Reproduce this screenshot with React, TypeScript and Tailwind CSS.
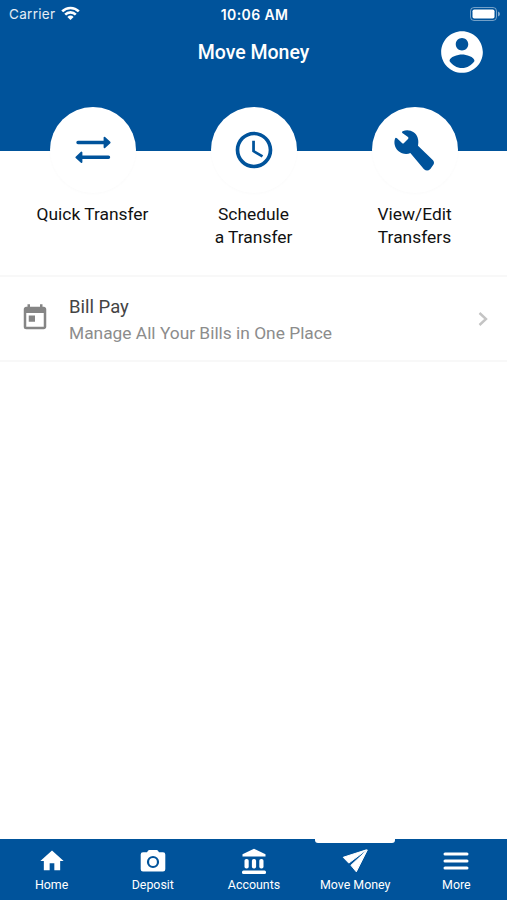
import React from 'react';
import { MdAccessTime, MdHome, MdToday } from 'react-icons/md';

const actions = [
  { label: ['Quick Transfer'], icon: <TransferIcon /> },
  { label: ['Schedule', 'a Transfer'], icon: <MdAccessTime size={44} /> },
  { label: ['View/Edit', 'Transfers'], icon: <WrenchIcon /> },
];

const tabs = [
  { label: 'Home', icon: <MdHome size={28} /> },
  { label: 'Deposit', icon: <CameraIcon /> },
  { label: 'Accounts', icon: <BankIcon /> },
  { label: 'Move Money', icon: <PlaneIcon />, active: true },
  { label: 'More', icon: <MenuIcon /> },
];

function TransferIcon() {
  return (
    <svg width="38" height="30" viewBox="0 0 38 30" fill="currentColor" stroke="currentColor" strokeLinecap="round" strokeLinejoin="round">
      <path d="M4 7.500H30M8 22.300H34.500" strokeWidth="3.400" />
      <path d="M30.500 2.700v9.600l5.200-4.800zM7.500 17.500v9.600l-5.200-4.800z" strokeWidth="1.800" />
    </svg>
  );
}

function WrenchIcon() {
  return (
    <svg width="50" height="50" viewBox="0 0 150 150" fill="currentColor">
      <path d="M38 19C56 11 77 20 83 38C86 47 85 54 84 62L129 106Q135 113 129 121L121 132Q112 141 102 133L61 84C51 89 35 87 25 78C14 68 11 52 15 41Q17 36 21 40L36 54Q39 57 42 54L54 42Q57 39 54 36L37 24Q34 21 38 19Z" />
    </svg>
  );
}

function AccountIcon() {
  return (
    <svg width="50" height="50" viewBox="0 0 24 24" fill="currentColor">
      <path d="M12 2C6.48 2 2 6.48 2 12s4.48 10 10 10 10-4.480 10-10S17.520 2 12 2zm0 3.300c1.660 0 3 1.340 3 3s-1.340 3-3 3-3-1.340-3-3 1.340-3 3-3zm0 14.400c-2.500 0-4.710-1.440-6-3.380.03-1.990 4-3.080 6-3.080 1.990 0 5.970 1.090 6 3.080-1.290 1.940-3.500 3.380-6 3.380z" />
    </svg>
  );
}

function CameraIcon() {
  return (
    <svg width="26" height="24" viewBox="0 0 26 24" fill="currentColor" fillRule="evenodd">
      <path d="M9.3 1h7.4q.8 0 1.3.7l1 1.600h4q2.300 0 2.300 2.300v14.600q0 2.300-2.300 2.300H3Q.7 22.500.7 20.200V5.600Q.7 3.300 3 3.300h4l1-1.600Q8.500 1 9.300 1zM13 6.900a6.100 6.100 0 1 0 0 12.200 6.100 6.100 0 0 0 0-12.200zm0 2.200a3.900 3.900 0 1 1 0 7.800 3.900 3.900 0 0 1 0-7.800z" />
    </svg>
  );
}

function BankIcon() {
  return (
    <svg width="26" height="27" viewBox="0 0 26 27" fill="currentColor">
      <path d="M13 .8L1.500 6.200v2.300h23V6.200z" />
      <rect x="3.500" y="11" width="4.200" height="9.500" rx="1.800" />
      <rect x="10.900" y="11" width="4.200" height="9.500" rx="1.800" />
      <rect x="18.300" y="11" width="4.200" height="9.500" rx="1.800" />
      <rect x="1" y="22.500" width="24" height="3.500" rx="1.500" />
    </svg>
  );
}

function PlaneIcon() {
  return (
    <svg width="28" height="26" viewBox="0 0 28 26" fill="currentColor" stroke="currentColor" strokeWidth="1" strokeLinejoin="round">
      <path d="M25.500 1.800L2.200 9.300l5.600 5.800z" />
      <path d="M26.300 2L9.900 17.300l5.400 6.500z" />
    </svg>
  );
}

function MenuIcon() {
  return (
    <svg width="26" height="22" viewBox="0 0 26 22" stroke="currentColor" strokeWidth="3" strokeLinecap="round">
      <path d="M2 4h22M2 11h22M2 18h22" />
    </svg>
  );
}

function StatusBar() {
  return (
    <div className="grid h-7 grid-cols-3 items-center pr-[7px] pl-[9px] font-['Inter',sans-serif]">
      <div className="flex items-center gap-[6px] text-white/90">
        <span className="text-[13.500px] tracking-[0.300px]">Carrier</span>
        <svg className="-mt-px" width="19" height="15" viewBox="0 0 19 15" fill="none" stroke="white" strokeWidth="2.600">
          <path d="M1.200 5.400a11.800 11.800 0 0 1 16.600 0M4.200 8.600a7.500 7.500 0 0 1 10.600 0" />
          <path d="M9.500 14l-3.100-3.100a4.400 4.400 0 0 1 6.200 0z" fill="white" stroke="none" />
        </svg>
      </div>
      <span className="text-center text-[14px] font-semibold tracking-[0.400px]">10:06 AM</span>
      <svg className="-mt-px justify-self-end" width="30" height="14" viewBox="0 0 30 14" fill="white">
        <rect x=".5" y=".5" width="26" height="13" rx="3.500" fill="none" stroke="white" strokeOpacity=".45" />
        <rect x="2.500" y="2.500" width="22" height="9" rx="1.800" />
        <path d="M28 4.500v5q2-.8 2-2.500t-2-2.500z" fillOpacity=".5" />
      </svg>
    </div>
  );
}

export default function App() {
  return (
    <div className="flex h-[900px] w-[507px] flex-col overflow-hidden bg-white font-['Roboto',sans-serif]">
      <header className="h-[151px] shrink-0 bg-[#00539b] text-white">
        <StatusBar />
        <div className="grid h-12 grid-cols-[1fr_auto_1fr] items-center px-5">
          <h1 className="col-start-2 pt-px text-[19.500px] font-medium">Move Money</h1>
          <button className="-mt-px justify-self-end" aria-label="Profile"><AccountIcon /></button>
        </div>
      </header>

      <section className="-mt-11 grid h-[170px] shrink-0 grid-cols-[161px_161px_161px] justify-center border-b-2 border-[#f8f8f8]">
        {actions.map(action => (
          <button key={action.label[0]} className="flex flex-col items-center">
            <span className="flex size-[86px] items-center justify-center rounded-full bg-white text-[#00539b] shadow-[0_1px_3px_rgba(0,0,0,0.02)]">
              {action.icon}
            </span>
            <span className="mt-[10px] text-[17.400px] leading-[22.500px] text-[#111]">
              {action.label.map(line => <span key={line} className="block">{line}</span>)}
            </span>
          </button>
        ))}
      </section>

      <button className="flex h-[85px] shrink-0 items-center border-b-2 border-[#f8f8f8] pr-[17px] pl-5 text-left">
        <MdToday size={30} className="-mt-px text-[#858585]" />
        <span className="ml-[19px] flex-1 pt-[3px]">
          <span className="block text-[18.500px] leading-[26px] text-[#444]">Bill Pay</span>
          <span className="block text-[17.350px] leading-[26px] text-[#8c8c8c]">Manage All Your Bills in One Place</span>
        </span>
        <svg width="14" height="18" viewBox="0 0 14 18" fill="none" stroke="#c4c4c4" strokeWidth="2.400">
          <path d="M3.500 3l6.500 6-6.500 6" />
        </svg>
      </button>

      <nav className="mt-auto grid h-[61px] shrink-0 grid-cols-5 bg-[#00539b] pl-px text-white">
        {tabs.map(tab => (
          <button key={tab.label} className="relative flex flex-col items-center">
            {tab.active && <span className="absolute -top-px h-[5px] w-20 rounded-b-[3px] bg-white" />}
            <span className="mt-[7px] flex h-[30px] items-center">{tab.icon}</span>
            <span className="text-[12.400px] leading-[17px]">{tab.label}</span>
          </button>
        ))}
      </nav>
    </div>
  );
}
